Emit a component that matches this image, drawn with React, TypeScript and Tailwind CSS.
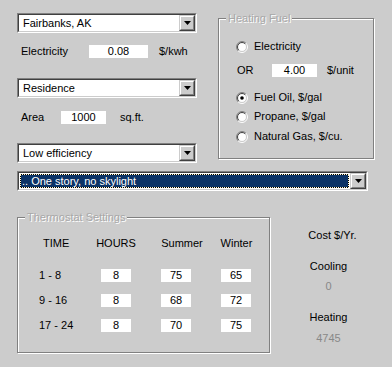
import React from "react";

const BG = "bg-[#cccccc]";

function Arrow() {
  return (
    <svg width="7" height="4" viewBox="0 0 7 4">
      <path d="M0 0H7L3.5 4Z" fill="#000" />
    </svg>
  );
}

function Combo({ text, highlight, width }: { text: string; highlight?: boolean; width: string }) {
  return (
    <div className={`${width} h-[20px] border-t border-l border-t-[#808080] border-l-[#808080] border-b border-r border-b-white border-r-white`}>
      <div className="h-full flex border-t border-l border-t-[#404040] border-l-[#404040] border-b border-r border-b-[#cccccc] border-r-[#cccccc] bg-white">
        <div className="flex-1 flex items-center min-w-0 p-[1px]">
          {highlight ? (
            <div className="w-full h-full bg-black">
              <div className="w-full h-full bg-[#0b3366] bg-clip-padding border border-dotted border-[#fff8d0] text-white flex items-center pl-[1px] leading-none">
                {text}
              </div>
            </div>
          ) : (
            <span className="pl-[3px] leading-none">{text}</span>
          )}
        </div>
        <div className="w-[16px] h-full border-t border-l border-t-[#cccccc] border-l-[#cccccc] border-b border-r border-b-[#404040] border-r-[#404040]">
          <div className="w-full h-full border-t border-l border-t-white border-l-white border-b border-r border-b-[#808080] border-r-[#808080] flex items-center justify-center bg-[#cccccc]">
            <Arrow />
          </div>
        </div>
      </div>
    </div>
  );
}

function Field({ value, width }: { value: string; width: string }) {
  return (
    <div className={`${width} h-[13px] bg-white flex items-center justify-center leading-none`}>
      {value}
    </div>
  );
}

function Radio({ checked }: { checked?: boolean }) {
  const arc = (r: number, tl: string, br: string) => {
    const d = r * 0.7071;
    const bl = `${6 - d} ${6 + d}`;
    const tr = `${6 + d} ${6 - d}`;
    return (
      <>
        <path d={`M${bl} A${r} ${r} 0 0 1 ${tr}`} stroke={tl} fill="none" />
        <path d={`M${tr} A${r} ${r} 0 0 1 ${bl}`} stroke={br} fill="none" />
      </>
    );
  };
  return (
    <svg width="12" height="12" viewBox="0 0 12 12" className="shrink-0">
      <circle cx="6" cy="6" r="4.5" fill="#fff" />
      {arc(5.5, "#808080", "#ffffff")}
      {arc(4.5, "#404040", "#cccccc")}
      {checked && <circle cx="6" cy="6" r="1.8" fill="#000" />}
    </svg>
  );
}

function GroupBox({
  title,
  className,
  children,
}: {
  title: string;
  className: string;
  children: React.ReactNode;
}) {
  return (
    <div className={`relative border border-[#808080] shadow-[inset_1px_1px_0_#fff,1px_1px_0_#fff] ${className}`}>
      <span
        className={`absolute left-[7px] -top-[7px] px-[2px] ${BG} leading-[13px] text-[#a8a8a8] [text-shadow:1px_1px_0_#fff]`}
      >
        {title}
      </span>
      {children}
    </div>
  );
}

export default function App() {
  return (
    <div
      className={`w-[392px] h-[367px] ${BG} overflow-hidden text-[11px] text-black`}
      style={{ fontFamily: '"Liberation Sans", Arial, sans-serif' }}
    >
      <div className="flex pt-[13px] pl-[17px]">
        {/* Left column */}
        <div className="w-[180px] flex flex-col">
          <Combo text="Fairbanks, AK" width="w-[180px]" />
          <div className="flex items-center mt-[12px] h-[13px]">
            <span className="w-[72px] pl-[4px] leading-none">Electricity</span>
            <Field value="0.08" width="w-[59px]" />
            <span className="ml-[11px] leading-none">$/kwh</span>
          </div>
          <div className="mt-[20px]">
            <Combo text="Residence" width="w-[180px]" />
          </div>
          <div className="flex items-center mt-[13px] h-[13px]">
            <span className="w-[44px] pl-[4px] leading-none">Area</span>
            <Field value="1000" width="w-[45px]" />
            <span className="ml-[14px] leading-none">sq.ft.</span>
          </div>
          <div className="mt-[19px]">
            <Combo text="Low efficiency" width="w-[180px]" />
          </div>
        </div>

        {/* Heating fuel */}
        <GroupBox title="Heating Fuel" className="ml-[21px] mt-[5px] w-[156px] h-[141px]">
          <div className="pt-[21px] pl-[17px] flex flex-col">
            <div className="flex items-center h-[13px] gap-[6px]">
              <Radio />
              <span className="leading-none">Electricity</span>
            </div>
            <div className="flex items-center h-[13px] mt-[11px]">
              <span className="w-[36px] pl-[1px] leading-none">OR</span>
              <Field value="4.00" width="w-[45px]" />
              <span className="ml-[10px] leading-none">$/unit</span>
            </div>
            <div className="flex items-center h-[13px] mt-[14px] gap-[6px]">
              <Radio checked />
              <span className="leading-none">Fuel Oil, $/gal</span>
            </div>
            <div className="flex items-center h-[13px] mt-[6px] gap-[6px]">
              <Radio />
              <span className="leading-none">Propane, $/gal</span>
            </div>
            <div className="flex items-center h-[13px] mt-[7px] gap-[6px]">
              <Radio />
              <span className="leading-none">Natural Gas, $/cu.</span>
            </div>
          </div>
        </GroupBox>
      </div>

      <div className="mt-[8px] ml-[17px]">
        <Combo text=".. One story, no skylight" highlight width="w-[351px]" />
      </div>

      <div className="flex mt-[26px] ml-[17px]">
        <GroupBox title="Thermostat Settings" className="w-[253px] h-[136px]">
          <div className="pt-[19px] pl-[21px] flex flex-col">
            <div className="flex items-center h-[13px] leading-none">
              <span className="w-[62px] pl-[4px]">TIME</span>
              <span className="w-[30px] flex justify-center whitespace-nowrap">HOURS</span>
              <span className="w-[30px] ml-[30px] flex justify-center whitespace-nowrap pl-[12px]">Summer</span>
              <span className="w-[30px] ml-[30px] flex justify-center whitespace-nowrap pl-[1px]">Winter</span>
            </div>
            {[
              ["1 - 8", "8", "75", "65"],
              ["9 - 16", "8", "68", "72"],
              ["17 - 24", "8", "70", "75"],
            ].map((r, i) => (
              <div key={i} className={`flex items-center h-[13px] ${i === 0 ? "mt-[19px]" : "mt-[12px]"}`}>
                <span className="w-[62px] leading-none">{r[0]}</span>
                <Field value={r[1]} width="w-[30px]" />
                <div className="ml-[30px]">
                  <Field value={r[2]} width="w-[30px]" />
                </div>
                <div className="ml-[30px]">
                  <Field value={r[3]} width="w-[30px]" />
                </div>
              </div>
            ))}
          </div>
        </GroupBox>

        <div className="w-[117px] flex flex-col items-center pt-[12px] leading-[13px]">
          <span className="pl-[8px]">Cost $/Yr.</span>
          <span className="mt-[18px]">Cooling</span>
          <span className="mt-[7px] text-[#888888]">0</span>
          <span className="mt-[18px]">Heating</span>
          <span className="mt-[8px] text-[#888888]">4745</span>
        </div>
      </div>
    </div>
  );
}
